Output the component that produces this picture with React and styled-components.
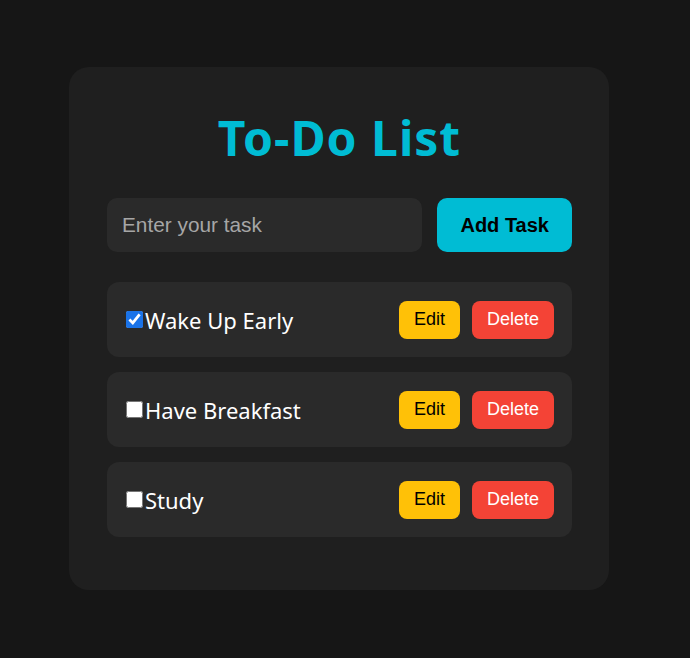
import React from "react";
import styled, { createGlobalStyle } from "styled-components";

const GlobalStyle = createGlobalStyle`
  body {
    margin: 0;
    background-color: #161616;
    font-family: "Liberation Sans", Arial, sans-serif;
  }
`;

const Page = styled.div`
  display: flex;
  justify-content: center;
  padding: 67px 12px 0 0;
`;

const Card = styled.div`
  width: 540px;
  box-sizing: border-box;
  background-color: #1f1f1f;
  border-radius: 20px;
  padding: 36px 37px 53px 38px;
`;

const Title = styled.h1`
  margin: 0 0 26px;
  text-align: center;
  color: #00bcd4;
  font-family: "Noto Sans", "Open Sans", sans-serif;
  font-size: 48px;
  font-weight: 700;
  letter-spacing: 1px;
  line-height: 69px;
`;

const InputRow = styled.div`
  display: flex;
  gap: 15px;
  margin-bottom: 30px;
`;

const TaskInput = styled.input`
  flex: 1;
  min-width: 0;
  height: 54px;
  box-sizing: border-box;
  border: none;
  border-radius: 10px;
  background-color: #2a2a2a;
  color: #fff;
  padding: 0 15px;
  font-family: "Liberation Sans", Arial, sans-serif;
  font-size: 20.8px;
  outline: none;
  &::placeholder {
    color: #a6a6a6;
  }
`;

const AddButton = styled.button`
  height: 54px;
  padding: 0 23px;
  border: none;
  border-radius: 10px;
  background-color: #00bcd4;
  color: #000;
  font-family: "Liberation Sans", Arial, sans-serif;
  font-size: 20px;
  font-weight: 700;
  cursor: pointer;
`;

const List = styled.ul`
  list-style: none;
  margin: 0;
  padding: 0;
  display: flex;
  flex-direction: column;
  gap: 15px;
`;

const Item = styled.li`
  display: flex;
  align-items: center;
  height: 75px;
  box-sizing: border-box;
  padding: 0 18px;
  background-color: #2a2a2a;
  border-radius: 12px;
`;

const Check = styled.input`
  width: 17px;
  height: 17px;
  margin: 0 2px 0 1px;
  accent-color: #1a73e8;
`;

const Label = styled.span`
  flex: 1;
  color: #fff;
  font-family: "Noto Sans", "Open Sans", sans-serif;
  font-size: 22px;
`;

const Actions = styled.div`
  display: flex;
  gap: 12px;
`;

const ActionButton = styled.button`
  height: 38px;
  padding: 0 15px;
  border: none;
  border-radius: 8px;
  background-color: ${(p) => (p.$danger ? "#f44336" : "#ffc107")};
  color: ${(p) => (p.$danger ? "#fff" : "#000")};
  font-family: "Liberation Sans", Arial, sans-serif;
  font-size: 18px;
  cursor: pointer;
`;

const initialTasks = [
  { id: 1, text: "Wake Up Early", done: true },
  { id: 2, text: "Have Breakfast", done: false },
  { id: 3, text: "Study", done: false },
];

const App = () => {
  const [tasks, setTasks] = React.useState(initialTasks);
  const [value, setValue] = React.useState("");

  const toggle = (id) => () =>
    setTasks(tasks.map((t) => (t.id === id ? { ...t, done: !t.done } : t)));

  return (
    <Page>
      <GlobalStyle />
      <Card>
        <Title>To-Do List</Title>
        <InputRow>
          <TaskInput
            placeholder="Enter your task"
            value={value}
            onChange={(e) => setValue(e.target.value)}
          />
          <AddButton>Add Task</AddButton>
        </InputRow>
        <List>
          {tasks.map(({ id, text, done }) => (
            <Item key={id}>
              <Check type="checkbox" checked={done} onChange={toggle(id)} />
              <Label>{text}</Label>
              <Actions>
                <ActionButton>Edit</ActionButton>
                <ActionButton $danger>Delete</ActionButton>
              </Actions>
            </Item>
          ))}
        </List>
      </Card>
    </Page>
  );
};

export default App;
